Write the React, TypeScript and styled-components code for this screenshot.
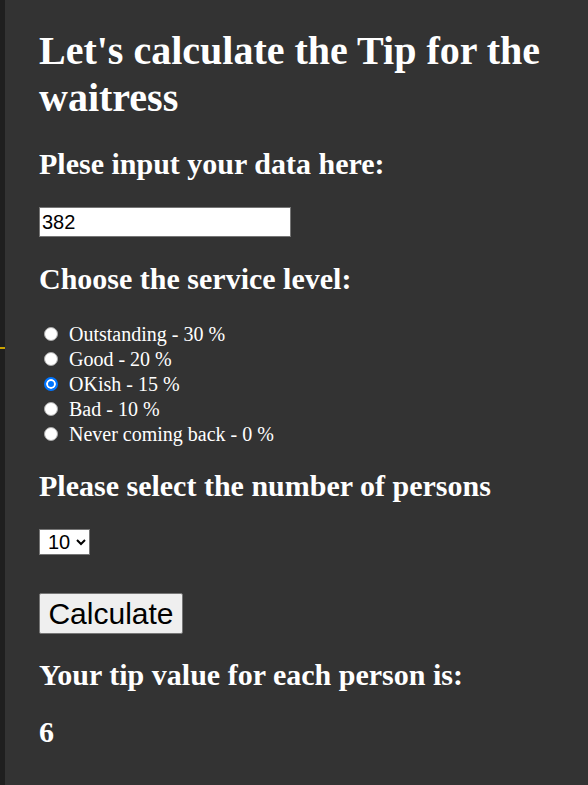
import {useState} from "react";
import styled, {createGlobalStyle} from "styled-components";

const GlobalStyle = createGlobalStyle`
    html, body {
        margin: 0;
        padding: 0;
        background: #333333;
    }
`
const Page = styled.div`
    position: relative;
    min-height: 100vh;
    box-sizing: border-box;
    background: #333333;
    border-left: 5px solid #1f1f1f;
    padding: 27px 0 40px 34px;
    display: flex;
    flex-direction: column;
    align-items: flex-start;
    color: #ffffff;
    font-family: 'Liberation Serif', 'Times New Roman', serif;
`
const Marker = styled.div`
    position: absolute;
    left: -5px;
    top: 347px;
    width: 5px;
    height: 2px;
    background: #c9a200;
`
const Title = styled.h1`
    margin: 0;
    font-size: 40px;
    font-weight: 700;
`
const Heading = styled.h2<{ $top: number }>`
    margin: ${props => props.$top}px 0 0;
    font-size: 30px;
    font-weight: 700;
`
const AmountInput = styled.input`
    margin-top: 26px;
    box-sizing: border-box;
    width: 252px;
    height: 30px;
    padding: 1px 2px;
    border: 1px solid #767676;
    border-radius: 0;
    background: #ffffff;
    color: #000000;
    font-family: 'Liberation Sans', Arial, sans-serif;
    font-size: 20px;
    outline: none;
`
const Options = styled.div`
    margin-top: 26px;
    display: flex;
    flex-direction: column;
`
const OptionRow = styled.label`
    display: flex;
    align-items: center;
    height: 25px;
    font-size: 20px;
    cursor: pointer;
`
const Radio = styled.input`
    appearance: none;
    box-sizing: border-box;
    flex: none;
    width: 14px;
    height: 14px;
    margin: 0 11px 2px 5px;
    border: 1px solid #a8a8a8;
    border-radius: 50%;
    background: #ffffff;
    cursor: pointer;

    &:checked {
        border: 2px solid #0075ff;
        background: #0075ff;
        box-shadow: inset 0 0 0 2px #ffffff;
    }
`
const PersonsSelect = styled.select`
    margin-top: 26px;
    box-sizing: border-box;
    width: 51px;
    height: 26px;
    padding: 0 0 0 4px;
    border: 1px solid #767676;
    border-radius: 0;
    background: #ffffff;
    color: #000000;
    font-family: 'Liberation Sans', Arial, sans-serif;
    font-size: 20px;
`
const CalcButton = styled.button`
    margin-top: 38px;
    box-sizing: border-box;
    height: 41px;
    width: 144px;
    padding: 1px 8px;
    border: 1px solid #767676;
    border-radius: 2px;
    background: #efefef;
    color: #000000;
    font-family: 'Liberation Sans', Arial, sans-serif;
    font-size: 30px;
    cursor: pointer;

    &:hover {
        background: #e5e5e5;
    }
`
const Result = styled.h3`
    margin: 23px 0 0;
    font-size: 30px;
    font-weight: 700;
`

const levels = [
	{label: "Outstanding - 30 %", value: 0.3},
	{label: "Good - 20 %", value: 0.2},
	{label: "OKish - 15 %", value: 0.15},
	{label: "Bad - 10 %", value: 0.1},
	{label: "Never coming back - 0 %", value: 0},
]

const persons = [1, 2, 3, 4, 5, 6, 7, 8, 9, 10]

const calcTip = (amount: string, rate: number, count: number) => Math.round((Number(amount) || 0) * rate / count)

export default function App() {
	const [amount, setAmount] = useState("382")
	const [rate, setRate] = useState(0.15)
	const [count, setCount] = useState(10)
	const [tip, setTip] = useState(calcTip("382", 0.15, 10))

	return (
		<>
			<GlobalStyle/>
			<Page>
				<Marker/>
				<Title>Let's calculate the Tip for the waitress</Title>
				<Heading $top={26}>Plese input your data here:</Heading>
				<AmountInput type="text" value={amount} onChange={e => setAmount(e.target.value)}/>
				<Heading $top={25}>Choose the service level:</Heading>
				<Options>
					{levels.map(level => (
						<OptionRow key={level.label}>
							<Radio
								type="radio"
								name="service"
								checked={rate === level.value}
								onChange={() => setRate(level.value)}
							/>
							{level.label}
						</OptionRow>
					))}
				</Options>
				<Heading $top={22}>Please select the number of persons</Heading>
				<PersonsSelect value={count} onChange={e => setCount(Number(e.target.value))}>
					{persons.map(n => <option key={n} value={n}>{n}</option>)}
				</PersonsSelect>
				<CalcButton onClick={() => setTip(calcTip(amount, rate, count))}>Calculate</CalcButton>
				<Heading $top={24}>Your tip value for each person is:</Heading>
				<Result>{tip}</Result>
			</Page>
		</>
	)
}
